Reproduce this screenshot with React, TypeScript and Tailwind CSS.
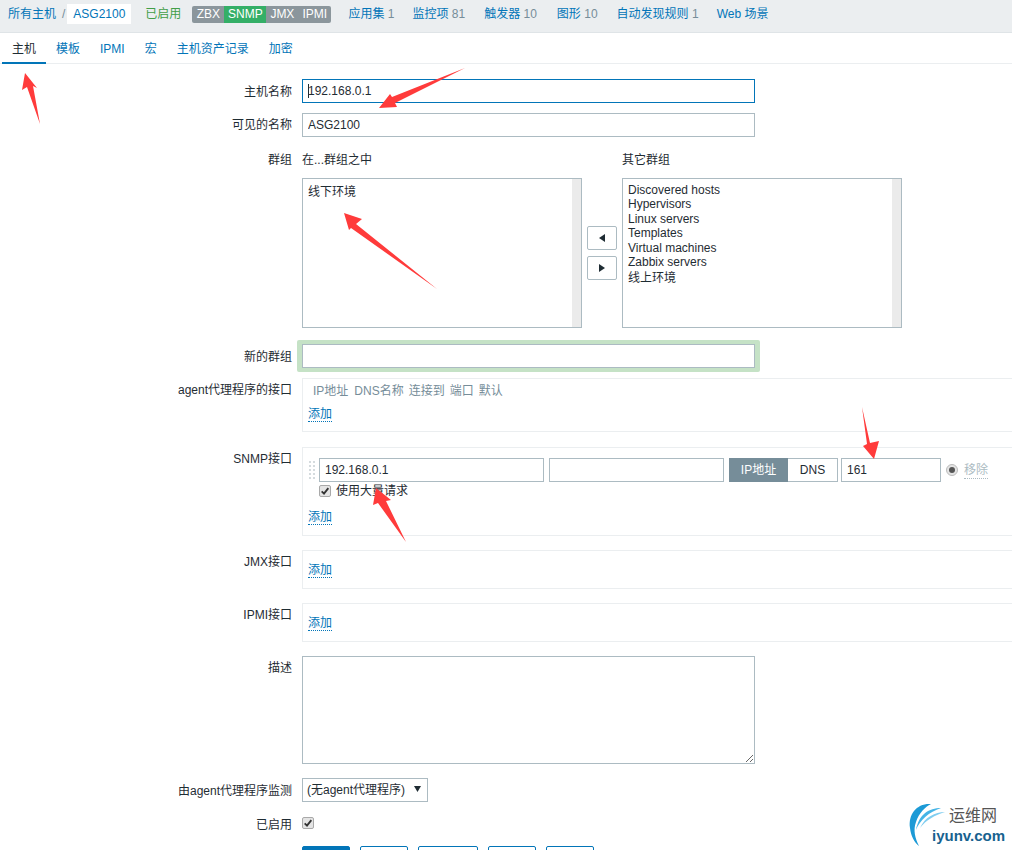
import { type ReactNode } from "react";

const FONT = { fontFamily: '"Liberation Sans", Arial, "Noto Sans CJK SC", sans-serif' };

const hostLinks = [
  { label: "应用集", count: "1", w: "ml-[17px]" },
  { label: "监控项", count: "81", w: "ml-[18px]" },
  { label: "触发器", count: "10", w: "ml-[19px]" },
  { label: "图形", count: "10", w: "ml-[20px]" },
  { label: "自动发现规则", count: "1", w: "ml-[19px]" },
];

const tabs = ["主机", "模板", "IPMI", "宏", "主机资产记录", "加密"];
const otherGroups = ["Discovered hosts", "Hypervisors", "Linux servers", "Templates", "Virtual machines", "Zabbix servers"];
const footerButtons = [
  { label: "克隆", w: "w-[48px]" },
  { label: "全克隆", w: "w-[60px]" },
  { label: "删除", w: "w-[48px]" },
  { label: "取消", w: "w-[48px]" },
];

function Row({
  label,
  className,
  labelClass = "pt-[3px]",
  children,
}: {
  label: string;
  className: string;
  labelClass?: string;
  children: ReactNode;
}) {
  return (
    <div className={`flex ${className}`}>
      <div className={`w-[292px] shrink-0 text-right text-[#1f2c33] ${labelClass}`}>{label}</div>
      <div className="ml-[10px] min-w-0 flex-1">{children}</div>
    </div>
  );
}

function TextInput({ value, className }: { value?: string; className: string }) {
  return (
    <input
      readOnly
      value={value ?? ""}
      className={`block h-[24px] border bg-white px-[5px] text-[#1f2c33] outline-none ${className}`}
    />
  );
}

function AddLink() {
  return <span className="border-b border-dotted border-[#0275b8] text-[#0275b8]">添加</span>;
}

function Checkbox() {
  return (
    <span className="flex h-[12px] w-[12px] items-center justify-center rounded-[2px] border border-[#a9a9a9] bg-[#e4e4e4]">
      <svg viewBox="0 0 12 12" className="h-[10px] w-[10px]" fill="none" stroke="#333" strokeWidth="2.2">
        <path d="M2 6.5 L4.8 9.2 L10 2.5" />
      </svg>
    </span>
  );
}

function ListBox({ children }: { children: ReactNode }) {
  return (
    <div className="flex h-[150px] w-[280px] border border-[#acbbc2] bg-white">
      <div className="flex-1 pl-[5px] pt-[3px] leading-[14.5px] text-[#1f2c33]">{children}</div>
      <div className="w-[9px] bg-[#ebebeb]" />
    </div>
  );
}

function Arrows() {
  return (
    <svg className="pointer-events-none absolute left-0 top-0" width="1012" height="850" fill="#ff3b3b">
      <polygon points="25,73 37,88 33,86 40,124 27,87 22,90" />
      <polygon points="465,68 392,97 390,94 379,108 397,107 395,103" />
      <polygon points="344,213 362,219 356,224 437,289 351,228 349,230" />
      <polygon points="862,407 870,443 879,441 874,459 863,446 867,444" />
      <polygon points="376,488 391,500 386,501 406,542 378,503 373,505" />
    </svg>
  );
}

function Watermark() {
  return (
    <div className="absolute left-[905px] top-[800px] h-[50px] w-[107px] bg-white/70">
      <svg className="absolute left-0 top-0" width="50" height="50">
        <path d="M26 4 C12 3 3 14 5 28 C6 36 9 42 14 46 C10 38 8 30 11 22 C14 13 20 7 26 4Z" fill="#1c9ad6" />
        <path d="M36 8 C24 8 14 14 11 30 C15 20 24 12 36 8Z" fill="#45b4e6" />
        <path d="M40 12 C30 12 20 17 15 28 C21 20 30 15 40 12Z" fill="#7fcdf0" />
      </svg>
      <span className="absolute left-[44px] top-[6px] whitespace-nowrap text-[16px] leading-[20px] text-[#555]">运维网</span>
      <span className="absolute left-[27px] top-[27px] whitespace-nowrap text-[15px] font-bold leading-[18px] text-[#17628f]">iyunv.com</span>
    </div>
  );
}

export default function App() {
  return (
    <div className="relative h-[850px] w-full overflow-hidden bg-white text-[12px]" style={FONT}>
      {/* host nav */}
      <div className="flex h-[33px] items-center border-b border-[#dfe4e7] bg-[#ebeef0] pb-[6px] pl-[8px] pt-[2px]">
        <span className="text-[#0275b8]">所有主机</span>
        <span className="ml-[6px] text-[#768d99]">/</span>
        <span className="ml-[2px] flex h-[20px] w-[64px] items-center justify-center bg-white text-[#0275b8]">ASG2100</span>
        <span className="ml-[14px] text-[#429e47]">已启用</span>
        <div className="ml-[11px] flex h-[17px] overflow-hidden rounded-[2px] bg-[#8b969c] leading-[17px] text-white">
          <span className="w-[32px] text-center">ZBX</span>
          <span className="w-[42px] bg-[#34af67] text-center">SNMP</span>
          <span className="w-[32px] text-center">JMX</span>
          <span className="w-[33px] text-center">IPMI</span>
        </div>
        {hostLinks.map((l) => (
          <span key={l.label} className={l.w}>
            <span className="text-[#0275b8]">{l.label}</span>
            <span className="text-[#768d99]"> {l.count}</span>
          </span>
        ))}
        <span className="ml-[18px] text-[#0275b8]">Web 场景</span>
      </div>

      {/* tabs */}
      <div className="flex h-[31px] border-b border-[#ebeef0] pl-[2px]">
        {tabs.map((t, i) => (
          <div
            key={t}
            className={
              i === 0
                ? "h-[31px] border-b-2 border-[#0275b8] px-[10px] pt-[7px] text-[#1f2c33]"
                : "h-[30px] px-[10px] pt-[7px] text-[#0275b8]"
            }
          >
            {t}
          </div>
        ))}
      </div>

      {/* form */}
      <Row label="主机名称" className="mt-[15px]" labelClass="pt-[4px]">
        <TextInput value="192.168.0.1" className="w-[453px] border-[#0275b8]" />
      </Row>
      <Row label="可见的名称" className="mt-[10px]">
        <TextInput value="ASG2100" className="w-[453px] border-[#acbbc2]" />
      </Row>

      <Row label="群组" className="mt-[10px]" labelClass="pt-[4px]">
        <div className="flex">
          <div>
            <div className="h-[31px] pt-[4px] text-[#1f2c33]">在...群组之中</div>
            <ListBox>
              <div className="pt-[3px]">线下环境</div>
            </ListBox>
          </div>
          <div className="mx-[5px] flex w-[30px] flex-col gap-[6px] pt-[79px]">
            <button aria-label="add" className="flex h-[24px] items-center justify-center rounded-[2px] border border-[#acbbc2] bg-white">
              <svg width="6" height="8" fill="#1f2c33"><polygon points="6,0 6,8 0,4" /></svg>
            </button>
            <button aria-label="remove" className="flex h-[24px] items-center justify-center rounded-[2px] border border-[#acbbc2] bg-white">
              <svg width="6" height="8" fill="#1f2c33"><polygon points="0,0 0,8 6,4" /></svg>
            </button>
          </div>
          <div>
            <div className="h-[31px] pt-[4px] text-[#1f2c33]">其它群组</div>
            <ListBox>
              <div className="pt-[0.5px]">
                {otherGroups.map((g) => (
                  <div key={g}>{g}</div>
                ))}
                <div className="mt-[1px]">线上环境</div>
              </div>
            </ListBox>
          </div>
        </div>
      </Row>

      <Row label="新的群组" className="mt-[12px] pt-[4px]" labelClass="pt-[4px]">
        <div className="-ml-[5px] -mt-[4px] w-[463px] rounded-[2px] bg-[#c5e2c6] px-[5px] py-[4px]">
          <TextInput className="w-[453px] border-[#acbbc2]" />
        </div>
      </Row>

      <Row label="agent代理程序的接口" className="mt-[6px]">
        <div className="h-[54px] border-y border-l border-[#ebeef0] pl-[5px] pt-[3px]">
          <div className="flex gap-[5px] pl-[5px] text-[#768d99]">
            <span className="mr-[1px]">IP地址</span>
            <span>DNS名称</span>
            <span>连接到</span>
            <span>端口</span>
            <span>默认</span>
          </div>
          <div className="mt-[5px]"><AddLink /></div>
        </div>
      </Row>

      <Row label="SNMP接口" className="mt-[15px]">
        <div className="h-[89px] border-y border-l border-[#ebeef0] pl-[5px] pt-[10px]">
          <div className="flex items-center">
            <svg width="11" height="24" fill="#d5dbde" className="shrink-0">
              {[3, 7, 11, 15, 19].map((y) => (
                <g key={y}>
                  <rect x="1" y={y} width="2" height="2" />
                  <rect x="5" y={y} width="2" height="2" />
                </g>
              ))}
            </svg>
            <TextInput value="192.168.0.1" className="w-[225px] border-[#acbbc2]" />
            <TextInput className="ml-[5px] w-[175px] border-[#acbbc2]" />
            <div className="ml-[5px] flex h-[24px] w-[109px]">
              <span className="flex w-[59px] items-center justify-center bg-[#768d99] text-white">IP地址</span>
              <span className="flex flex-1 items-center justify-center border-y border-r border-[#acbbc2] text-[#1f2c33]">DNS</span>
            </div>
            <TextInput value="161" className="ml-[3px] w-[100px] border-[#acbbc2]" />
            <span className="ml-[5px] flex h-[12px] w-[12px] items-center justify-center rounded-full border border-[#bbb] bg-[#e4e4e4]">
              <span className="h-[6px] w-[6px] rounded-full bg-[#555]" />
            </span>
            <span className="ml-[6px] border-b border-dotted border-[#acbbc2] leading-[16px] text-[#acbbc2]">移除</span>
          </div>
          <div className="ml-[11px] flex items-center gap-[5px] text-[#1f2c33]">
            <Checkbox />
            <span>使用大量请求</span>
          </div>
          <div className="mt-[8px]"><AddLink /></div>
        </div>
      </Row>

      <Row label="JMX接口" className="mt-[14px]">
        <div className="h-[39px] border-y border-l border-[#ebeef0] pl-[5px] pt-[10px]"><AddLink /></div>
      </Row>
      <Row label="IPMI接口" className="mt-[14px]">
        <div className="h-[39px] border-y border-l border-[#ebeef0] pl-[5px] pt-[10px]"><AddLink /></div>
      </Row>

      <Row label="描述" className="mt-[14px]">
        <textarea readOnly value="" className="block h-[108px] w-[453px] border border-[#acbbc2] bg-white outline-none" />
      </Row>

      <Row label="由agent代理程序监测" className="mt-[14px]" labelClass="pt-[4px]">
        <div className="flex h-[24px] w-[126px] items-center border border-[#acbbc2] pl-[4px] text-[#1f2c33]">
          <span>(无agent代理程序)</span>
          <svg width="7" height="6" fill="#1f2c33" className="ml-[9px] -mt-[2px]"><polygon points="0,0 7,0 3.5,6" /></svg>
        </div>
      </Row>

      <Row label="已启用" className="mt-[15px] h-[12px]" labelClass="-mt-[1px]">
        <Checkbox />
      </Row>

      {/* only the top edge of the action buttons fits in the window */}
      <div className="ml-[302px] mt-[17px] flex gap-[10px]">
        <button aria-label="更新" className="h-[24px] w-[48px] rounded-[2px] border border-[#0275b8] bg-[#0275b8]" />
        {footerButtons.map((b) => (
          <button key={b.label} aria-label={b.label} className={`h-[24px] rounded-[2px] border border-[#0275b8] ${b.w}`} />
        ))}
      </div>

      {/* focus caret of the first field */}
      <span className="absolute left-[308px] top-[84px] h-[14px] w-px bg-[#1f2c33]" />
      <Arrows />
      <Watermark />
    </div>
  );
}
